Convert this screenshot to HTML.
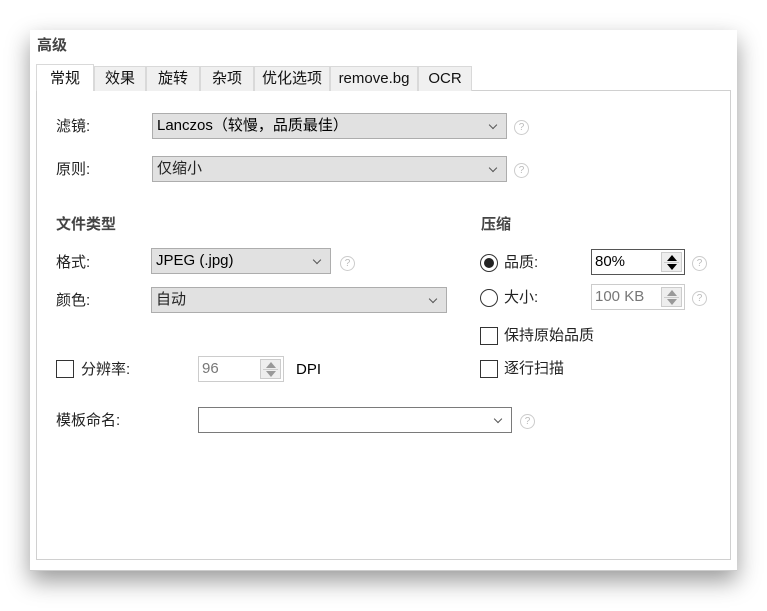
<!DOCTYPE html>
<html><head><meta charset="utf-8"><style>
*{box-sizing:border-box;margin:0;padding:0}
body{width:767px;height:611px;background:#fff;position:relative;overflow:hidden;font-family:"Liberation Sans","Noto Sans CJK SC",sans-serif;font-size:15px;color:#222}
.win{position:absolute;left:30px;top:30px;width:707px;height:541px;background:#fff;box-shadow:0 10px 22px rgba(0,0,0,.4);border-bottom:1px solid #ccc}
.a{position:absolute}
.t{position:absolute;white-space:nowrap;line-height:18px}
.tab{position:absolute;top:66px;height:25px;background:#f0f0f0;border:1px solid #d9d9d9;border-bottom:none;text-align:center;line-height:24px;font-size:15px;color:#111}
.grp{position:absolute;left:36px;top:90px;width:695px;height:470px;border:1px solid #d0d0d0}
.cb{position:absolute;background:#e1e1e1;border:1px solid #adadad;height:26px;line-height:24px;padding-left:4px}
.cb.w{background:#fff;border-color:#7a7a7a}
.arr{position:absolute;right:10px;top:8px;width:6px;height:6px;border-right:1.2px solid #555;border-bottom:1.2px solid #555;transform:rotate(45deg)}
.help{position:absolute;width:15px;height:15px;border:1px solid #ccc;border-radius:50%;font-size:10px;color:#bbb;text-align:center;line-height:13px}
.spin{position:absolute;background:#fff;border:1px solid #ccc;height:26px;line-height:24px;padding-left:3px;color:#777}
.spin.on{border-color:#555;color:#000}
.sb{position:absolute;right:2px;top:2px;width:21px;height:20px;border:1px solid #ccc;background:#eee}
.sb:after{content:"";position:absolute;left:2px;right:2px;top:9px;border-top:1px solid #ccc}
.up,.dn{position:absolute;left:5px;width:0;height:0;border-left:5px solid transparent;border-right:5px solid transparent}
.up{top:2px;border-bottom:6px solid #999}.dn{top:11px;border-top:6px solid #999}
.on .up{border-bottom-color:#000}.on .dn{border-top-color:#000}
.chk{position:absolute;width:18px;height:18px;border:1px solid #333;background:#fff}
.rad{position:absolute;width:18px;height:18px;border:1px solid #333;border-radius:50%;background:#fff}
</style></head><body>
<div class="win"></div>
<div class="t" style="left:37px;top:37px;font-weight:bold;color:#444;font-size:15px">高级</div>
<div class="grp"></div>
<div class="tab" style="left:36px;top:64px;width:58px;height:27px;background:#fff;line-height:27px">常规</div>
<div class="tab" style="left:94px;width:52px">效果</div>
<div class="tab" style="left:146px;width:54px">旋转</div>
<div class="tab" style="left:200px;width:54px">杂项</div>
<div class="tab" style="left:254px;width:76px">优化选项</div>
<div class="tab" style="left:330px;width:88px">remove.bg</div>
<div class="tab" style="left:418px;width:54px">OCR</div>

<div class="t" style="left:56px;top:118px">滤镜:</div>
<div class="cb" style="left:152px;top:113px;width:355px;color:#000">Lanczos（较慢，品质最佳）<div class="arr"></div></div>
<div class="help" style="left:514px;top:120px">?</div>
<div class="t" style="left:56px;top:161px">原则:</div>
<div class="cb" style="left:152px;top:156px;width:355px">仅缩小<div class="arr"></div></div>
<div class="help" style="left:514px;top:163px">?</div>

<div class="t" style="left:56px;top:216px;font-weight:bold;color:#444">文件类型</div>
<div class="t" style="left:481px;top:216px;font-weight:bold;color:#444">压缩</div>

<div class="t" style="left:56px;top:254px">格式:</div>
<div class="cb" style="left:151px;top:248px;width:180px;color:#000">JPEG (.jpg)<div class="arr"></div></div>
<div class="help" style="left:340px;top:256px">?</div>
<div class="t" style="left:56px;top:292px">颜色:</div>
<div class="cb" style="left:151px;top:287px;width:296px">自动<div class="arr"></div></div>

<div class="rad" style="left:480px;top:254px"><div class="a" style="left:3px;top:3px;width:10px;height:10px;border-radius:50%;background:#222"></div></div>
<div class="t" style="left:504px;top:254px">品质:</div>
<div class="spin on" style="left:591px;top:249px;width:94px">80%<div class="sb"><div class="up"></div><div class="dn"></div></div></div>
<div class="help" style="left:692px;top:256px">?</div>
<div class="rad" style="left:480px;top:289px"></div>
<div class="t" style="left:504px;top:289px">大小:</div>
<div class="spin" style="left:591px;top:284px;width:94px">100 KB<div class="sb"><div class="up"></div><div class="dn"></div></div></div>
<div class="help" style="left:692px;top:291px">?</div>
<div class="chk" style="left:480px;top:327px"></div>
<div class="t" style="left:504px;top:327px">保持原始品质</div>
<div class="chk" style="left:480px;top:360px"></div>
<div class="t" style="left:504px;top:360px">逐行扫描</div>

<div class="chk" style="left:56px;top:360px"></div>
<div class="t" style="left:81px;top:361px">分辨率:</div>
<div class="spin" style="left:198px;top:356px;width:86px">96<div class="sb"><div class="up"></div><div class="dn"></div></div></div>
<div class="t" style="left:296px;top:361px;color:#000">DPI</div>

<div class="t" style="left:56px;top:412px">模板命名:</div>
<div class="cb w" style="left:198px;top:407px;width:314px"><div class="arr"></div></div>
<div class="help" style="left:520px;top:414px">?</div>
</body></html>
